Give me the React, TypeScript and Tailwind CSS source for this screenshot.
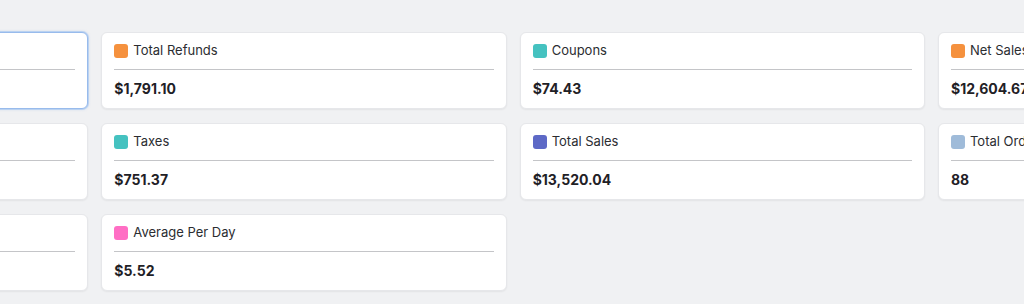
import React from 'react';

type Stat = {
  label: string;
  value: string;
  color: string;
  active?: boolean;
};

const stats: Stat[] = [
  { label: 'Gross Sales', value: '$14,395.77', color: 'bg-[#5b6bc8]', active: true },
  { label: 'Total Refunds', value: '$1,791.10', color: 'bg-[#f5913e]' },
  { label: 'Coupons', value: '$74.43', color: 'bg-[#45c2c0]' },
  { label: 'Net Sales', value: '$12,604.67', color: 'bg-[#f5913e]' },
  { label: 'Shipping', value: '$90.00', color: 'bg-[#9fbbd9]' },
  { label: 'Taxes', value: '$751.37', color: 'bg-[#45c2c0]' },
  { label: 'Total Sales', value: '$13,520.04', color: 'bg-[#5d69c6]' },
  { label: 'Total Orders', value: '88', color: 'bg-[#9fbbd9]' },
  { label: 'Items Sold', value: '142', color: 'bg-[#f5913e]' },
  { label: 'Average Per Day', value: '$5.52', color: 'bg-[#ff6ec4]' },
];

const StatCard = ({ stat }: { stat: Stat }) => (
  <div
    className={`rounded-md bg-white px-[12px] ${
      stat.active
        ? 'border border-[#98bbec] shadow-[0_0_0_1px_rgba(160,195,240,0.55),0_0_3px_rgba(120,170,235,0.5)]'
        : 'border border-[#e6e7ea] shadow-[0_1px_2px_rgba(0,0,0,0.06)]'
    }`}
  >
    <div className="flex h-[20px] items-center gap-[5px] mt-[8px] mb-[8px]">
      <span className={`h-[14px] w-[14px] shrink-0 rounded-[3px] ${stat.color}`} />
      <span className="text-[13px] text-[#2b2d31] whitespace-nowrap">{stat.label}</span>
    </div>
    <div className="border-t border-[#c4c5c8]" />
    <div className="pt-[10px] pb-[10px] text-[14px] leading-[18px] font-bold text-[#1f2126] whitespace-nowrap">
      {stat.value}
    </div>
  </div>
);

export default function App() {
  return (
    <div
      className="h-[304px] w-[1024px] overflow-hidden bg-[#f0f1f3] pt-[32px]"
      style={{ fontFamily: 'Inter, "Noto Sans", sans-serif' }}
    >
      <div className="ml-[-317px] grid w-[1660px] grid-cols-[repeat(4,405.33px)] gap-x-[13px] gap-y-[14px]">
        {stats.map((s) => (
          <StatCard key={s.label} stat={s} />
        ))}
      </div>
    </div>
  );
}
